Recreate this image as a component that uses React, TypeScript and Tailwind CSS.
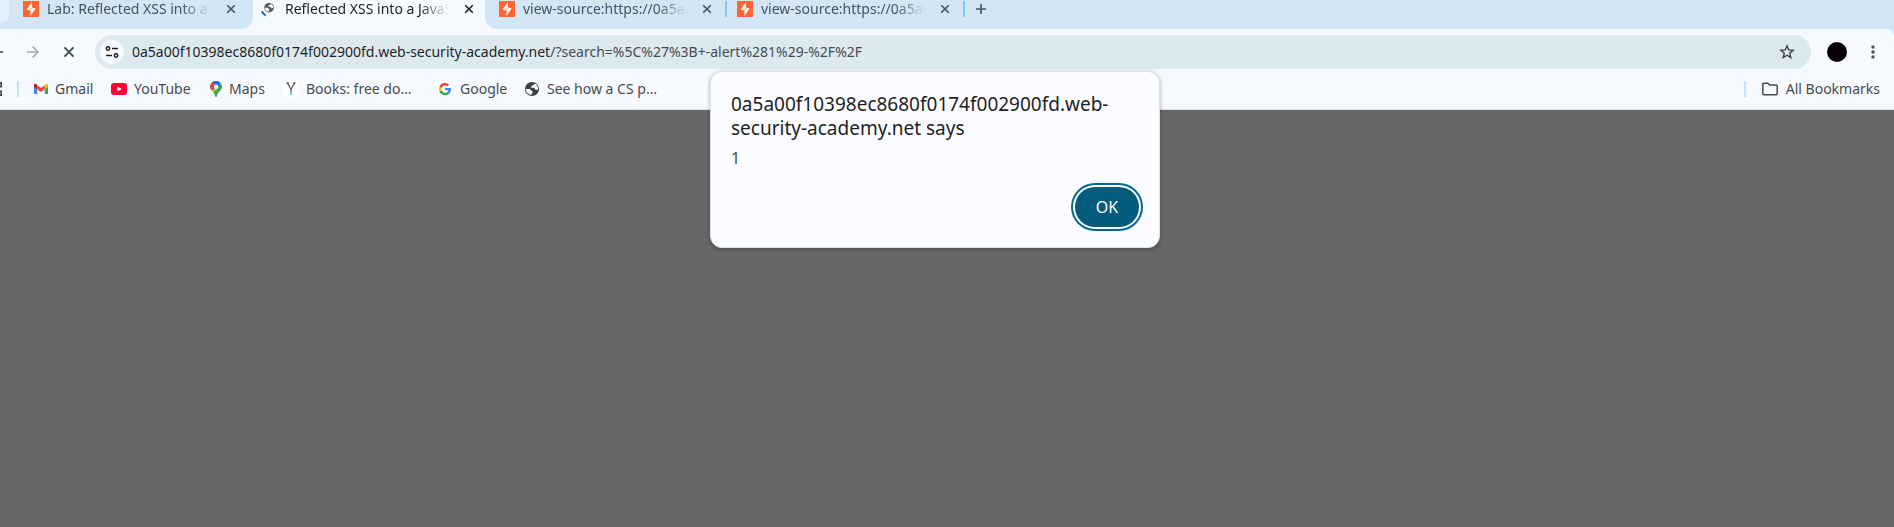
import type { ReactNode } from "react";

const BurpIcon = () => (
  <svg className="mt-px size-4 shrink-0" viewBox="0 0 16 16" aria-hidden="true">
    <rect width="16" height="16" fill="#ff6633" />
    <path d="M9 1 3.600 8.400 7.600 9.600 7.400 15 12.600 7.600 8.800 6.400z" fill="#fff" />
    <path d="M6.600 7.600 8.600 8.200 9.600 8.300" fill="none" stroke="#ff6633" strokeWidth=".7" />
  </svg>
);

const GlobeShape = () => (
  <>
    <circle cx="8" cy="8" r="7" fill="#3c4043" />
    <path d="M1.900 8.200c1.500-.3 3.300-.3 4.500.3 1 .5.700 1.500 1.900 1.800.7.200.6 1.100 0 1.500-.6.400-.7 1-.8 2C4.400 13.600 2 11.300 1.900 8.200z" fill="#fff" />
    <path d="M10.400 2.500c-.2 1.400-1 1.700-1.900 1.800-.8.100-.6 1.100-1.300 1.400-.5.200-.6.600-.2.900.8.400 1.800-.2 2.800.2 1.200.5.900 1.800 2.100 2 .8.100 1.400-.200 2.100-.600.3-2.600-1.200-4.900-3.600-5.700z" fill="#fff" />
  </>
);

const LoadingGlobe = () => (
  <svg className="mt-px size-4 shrink-0" viewBox="0 0 16 16" aria-hidden="true">
    <g transform="translate(2.600 1.200) scale(.68)" opacity=".85">
      <GlobeShape />
    </g>
    <path d="M1 10.300a7 7 0 0 0 3.800 4.300" fill="none" stroke="#0b6a99" strokeWidth="2" />
  </svg>
);

const CloseIcon = ({ className }: { className: string }) => (
  <svg className={className} viewBox="0 0 10 10" fill="none" stroke="currentColor" aria-hidden="true">
    <path d="M1.200 1.200l7.600 7.600M8.800 1.200l-7.600 7.600" strokeWidth="1.600" />
  </svg>
);

const GmailIcon = () => (
  <svg className="h-4 w-[14px]" viewBox="0 0 14 16" aria-hidden="true">
    <path d="M0 4v8.200c0 .5.400.9.900.9h2.300V7z" fill="#4285f4" />
    <path d="M14 4v8.200c0 .5-.4.900-.9.900h-2.300V7z" fill="#34a853" />
    <path d="M3.200 4.200 7 7.100l3.800-2.900v4L7 11 3.200 8.200z" fill="#ea4335" />
    <path d="M0 4.200c0-1.400 1.400-1.800 2.300-1.100l.9.700v4.400L0 5.800z" fill="#c5221f" />
    <path d="M14 4.200c0-1.400-1.400-1.800-2.300-1.100l-.9.700v4.400L14 5.800z" fill="#fbbc04" />
  </svg>
);

const YouTubeIcon = () => (
  <svg className="size-4" viewBox="0 0 16 16" aria-hidden="true">
    <rect y="2" width="16" height="12" rx="3" fill="#ff0033" />
    <path d="M6.400 5.400v5.200L10.800 8z" fill="#fff" />
  </svg>
);

const MapsIcon = () => (
  <svg className="h-4 w-[12px]" viewBox="0 0 12 16" aria-hidden="true">
    <clipPath id="pin">
      <path d="M6 0a5.800 5.800 0 0 0-5.800 5.800C.2 10 4.600 10.500 5.400 15.400c.1.800 1.100.8 1.200 0C7.400 10.500 11.800 10 11.800 5.800A5.800 5.800 0 0 0 6 0z" />
    </clipPath>
    <g clipPath="url(#pin)">
      <rect width="12" height="16" fill="#34a853" />
      <path d="M0 12V8L8 0h4v4L2 13z" fill="#fbbc04" />
      <path d="M0 0h12L3.500 9.500 0 7z" fill="#4285f4" />
      <path d="M0 0h4l2 3.500L2.500 8 0 9z" fill="#ea4335" />
      <path d="M2 0h10v2L8 6 4.500 3z" fill="#1a73e8" />
      <path d="M9 2l4-1v6L6 16 4 11l5-5z" fill="#34a853" />
    </g>
    <circle cx="6" cy="5.800" r="2.200" fill="#fff" />
  </svg>
);

const BooksIcon = () => (
  <svg className="size-4" viewBox="0 0 16 16" aria-hidden="true">
    <rect width="16" height="16" fill="#fff" />
    <path d="M4.500 2 8 8.500 11.500 2M8 8v3M3.500 2h2.200M10.300 2h2.200" fill="none" stroke="#555" strokeWidth="1.300" />
    <path d="M8 10.500V14" stroke="#45b5dd" strokeWidth="1.500" />
  </svg>
);

const GoogleIcon = () => (
  <svg className="size-4" viewBox="0 0 24 24" aria-hidden="true">
    <circle cx="12" cy="12" r="12" fill="#fff" />
    <g transform="translate(2 2) scale(.84)">
      <path d="M22.560 12.250c0-.78-.07-1.530-.2-2.250H12v4.260h5.920a5.060 5.060 0 0 1-2.200 3.320v2.770h3.570c2.080-1.920 3.270-4.740 3.270-8.100z" fill="#4285f4" />
      <path d="M12 23c2.970 0 5.460-.98 7.280-2.660l-3.570-2.770a6.600 6.600 0 0 1-9.870-3.470H2.180v2.840A11 11 0 0 0 12 23z" fill="#34a853" />
      <path d="M5.840 14.090a6.600 6.600 0 0 1 0-4.180V7.070H2.180a11 11 0 0 0 0 9.860z" fill="#fbbc05" />
      <path d="M12 5.380c1.620 0 3.060.56 4.210 1.640l3.150-3.150A11 11 0 0 0 2.180 7.070l3.660 2.840A6.600 6.600 0 0 1 12 5.380z" fill="#ea4335" />
    </g>
  </svg>
);

const GlobeIcon = () => (
  <svg className="size-4" viewBox="0 0 16 16" aria-hidden="true">
    <GlobeShape />
  </svg>
);

const Tab = ({ title, icon, active, width }: { title: string; icon: ReactNode; active?: boolean; width: string }) => (
  <div
    role="tab"
    aria-selected={!!active}
    className={`flex h-[29px] shrink-0 items-start ${width} ${active ? "bg-[#f6f9fe] text-[#1f1f1f]" : "bg-[#d2e6f5] text-[#3f5664]"}`}
  >
    {icon}
    <span className="ml-2 h-[18px] w-[164px] overflow-hidden text-sm leading-[18px] whitespace-nowrap [mask-image:linear-gradient(to_right,black_82%,transparent)]">
      {title}
    </span>
    <button aria-label={`Close ${title}`} className="ml-3 flex h-[18px] w-4 items-center justify-center">
      <CloseIcon className="size-[10px]" />
    </button>
  </div>
);

const bookmarks = [
  { label: "Gmail", icon: <GmailIcon />, width: "w-[77px]" },
  { label: "YouTube", icon: <YouTubeIcon />, width: "w-[99px]" },
  { label: "Maps", icon: <MapsIcon />, width: "w-[73px]" },
  { label: "Books: free do…", icon: <BooksIcon />, width: "w-[154px]" },
  { label: "Google", icon: <GoogleIcon />, width: "w-[87px]" },
  { label: "See how a CS p…", icon: <GlobeIcon />, width: "w-[150px]" },
];

export default function App() {
  return (
    <div className="relative flex min-h-screen flex-col overflow-hidden bg-[#666666] font-['Noto_Sans',sans-serif]">
      <div role="tablist" className="flex h-[29px] bg-[#d2e6f5]">
        <div className="h-[23px] w-[9px] shrink-0 rounded-br-lg bg-[#e3f1fc]" />
        <div className="flex bg-[#f6f9fe]">
          <div className="overflow-hidden rounded-br-xl">
            <Tab title="Lab: Reflected XSS into a JavaScript" icon={<BurpIcon />} width="w-[244px] pl-[14px]" />
          </div>
          <Tab title="Reflected XSS into a JavaScript string" icon={<LoadingGlobe />} active width="w-[232px] pl-2" />
          <div className="overflow-hidden rounded-bl-xl">
            <Tab title="view-source:https://0a5a00f10398" icon={<BurpIcon />} width="w-[240px] pl-[14px]" />
          </div>
        </div>
        <div className="mt-px h-4 w-[2px] bg-[#7cc8f8]" />
        <Tab title="view-source:https://0a5a00f10398" icon={<BurpIcon />} width="w-[236px] pl-[10px]" />
        <div className="mt-px h-4 w-[2px] bg-[#7cc8f8]" />
        <button aria-label="New tab" className="ml-[10px] flex h-[18px] w-3 items-center text-[#3f5664]">
          <svg viewBox="0 0 12 12" className="size-3" stroke="currentColor" strokeWidth="1.600">
            <path d="M6 1v10M1 6h10" />
          </svg>
        </button>
      </div>

      <div className="bg-[#d2e6f5]">
        <div className="flex h-[45px] items-start rounded-tr-lg bg-[#f6f9fe] pt-[6px] pr-[19px]">
          <div className="flex h-[34px] w-[95px] shrink-0 items-center text-[#3f4f5c]">
            <button aria-label="Back" className="flex w-[27px]">
              <svg viewBox="0 0 3 12" className="h-3 w-[3px]" stroke="currentColor" strokeWidth="1.600">
                <path d="M0 6h3" />
              </svg>
            </button>
            <button aria-label="Forward" className="flex w-9 text-[#a8abaf]">
              <svg viewBox="0 0 12 12" className="size-3" fill="none" stroke="currentColor" strokeWidth="1.600">
                <path d="M0 6h11M5.600.6 11 6l-5.400 5.400" />
              </svg>
            </button>
            <button aria-label="Stop loading">
              <CloseIcon className="size-3" />
            </button>
          </div>
          <div className="flex h-[34px] min-w-0 flex-1 items-center rounded-full bg-[#dde9f0] pr-4 pl-[5px]">
            <button aria-label="View site information" className="flex size-6 items-center justify-center rounded-full bg-[#f6f9fe]">
              <svg viewBox="0 0 14 12" className="h-3 w-[14px]" fill="none" stroke="#1f1f1f" strokeWidth="1.500">
                <circle cx="3" cy="2.500" r="1.700" />
                <path d="M7 2.500h6M1 9.500h6" />
                <circle cx="11" cy="9.500" r="1.700" />
              </svg>
            </button>
            <div role="textbox" aria-label="Address" className="ml-2 flex-1 text-sm leading-5 whitespace-nowrap text-[#474b4f]">
              <span className="text-[#1f1f1f]">0a5a00f10398ec8680f0174f002900fd.web-security-academy.net</span>
              /?search=%5C%27%3B+-alert%281%29-%2F%2F
            </div>
            <button aria-label="Bookmark this tab">
              <svg viewBox="0 0 16 16" className="size-4" fill="none" stroke="#3c4043" strokeWidth="1.400">
                <path d="m8 1.800 1.700 4.100 4.400.4-3.400 2.900 1.100 4.300L8 11.200l-3.800 2.300 1.100-4.300-3.400-2.900 4.400-.4z" />
              </svg>
            </button>
          </div>
          <button aria-label="Profile" className="mt-[7px] ml-4 size-5 rounded-full bg-[#080009]" />
          <button aria-label="Menu" className="mt-[10px] ml-6 flex w-[4px]">
            <svg viewBox="0 0 4 14" className="h-[14px] w-[4px]" fill="#3f5664">
              <circle cx="2" cy="2" r="1.700" />
              <circle cx="2" cy="7" r="1.700" />
              <circle cx="2" cy="12" r="1.700" />
            </svg>
          </button>
        </div>
      </div>

      <nav aria-label="Bookmarks" className="flex h-9 items-center border-b border-[#dfe3e8] bg-[#f6f9fe] pr-[14px] pb-[6px] text-sm leading-[18px] text-[#474b4f]">
        <button aria-label="Apps" className="flex w-[17px] shrink-0">
          <svg viewBox="0 0 2 14" className="h-[14px] w-[2px]" fill="none" stroke="#3c4043" strokeWidth="1.500">
            <path d="M-2 .8h3.200v4H-2M-2 9.200h3.200v4H-2" />
          </svg>
        </button>
        <div className="mr-[15px] h-4 w-[2px] shrink-0 bg-[#c2e3fb]" />
        {bookmarks.map((b) => (
          <a key={b.label} href="#" className={`flex shrink-0 items-center gap-[7px] whitespace-nowrap ${b.width}`}>
            {b.icon}
            {b.label}
          </a>
        ))}
        <div className="mr-4 ml-auto h-4 w-[2px] shrink-0 bg-[#c2e3fb]" />
        <button className="flex shrink-0 items-center gap-2 whitespace-nowrap">
          <svg viewBox="0 0 16 14" className="h-[14px] w-4" fill="none" stroke="#474b4f" strokeWidth="1.500">
            <path d="M.8 2.200c0-.6.400-1 1-1h4l1.800 1.900h6.600c.6 0 1 .4 1 1v7.600c0 .6-.4 1-1 1H1.800c-.6 0-1-.4-1-1z" />
          </svg>
          All Bookmarks
        </button>
      </nav>

      <main className="flex-1" />

      <div className="absolute inset-x-0 top-[71px] flex justify-center pr-6">
        <div
          role="alertdialog"
          aria-labelledby="dialog-title"
          aria-describedby="dialog-message"
          className="w-[450px] rounded-xl border border-[#dbe3ea] bg-[#fbfcff] px-5 py-5 shadow-[0_1px_4px_rgba(0,0,0,0.3)]"
        >
          <h1 id="dialog-title" className="text-[19px] leading-6 text-[#1f1f1f]">
            0a5a00f10398ec8680f0174f002900fd.web-<wbr />security-academy.net says
          </h1>
          <p id="dialog-message" className="mt-[7px] text-base leading-[22px] text-[#474b4f]">1</p>
          <div className="flex justify-end pt-[18px]">
            <button className="h-10 w-16 rounded-full bg-[#045b7c] text-base text-white ring-2 ring-[#04698f] ring-offset-2 ring-offset-[#fbfcff]">
              OK
            </button>
          </div>
        </div>
      </div>
    </div>
  );
}
